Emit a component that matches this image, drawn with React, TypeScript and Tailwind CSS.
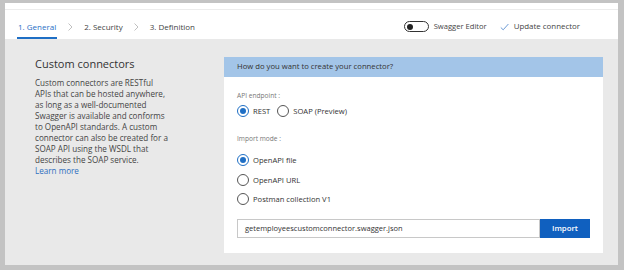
import { useState } from "react";

const font = { fontFamily: '"Open Sans", "Noto Sans", sans-serif' };

function Chevron() {
    return (
        <svg width="5" height="8" viewBox="0 0 5 8" className="mx-[11px]">
            <path d="M0.5 0.5 L4 4 L0.5 7.5" fill="none" stroke="#b0b0b0" strokeWidth="0.8" />
        </svg>
    );
}

function Radio({ label, checked, onClick }: { label: string; checked: boolean; onClick: () => void }) {
    return (
        <button onClick={onClick} className="flex items-center gap-[4px] text-[7.6px] text-[#333] leading-[12px]">
            <span
                className={`w-[12px] h-[12px] rounded-full border flex items-center justify-center ${checked ? "border-[#1f6fc5]" : "border-[#555]"}`}
            >
                {checked && <span className="w-[6px] h-[6px] rounded-full bg-[#1f6fc5]" />}
            </span>
            <span>{label}</span>
        </button>
    );
}

export default function App() {
    const [endpoint, setEndpoint] = useState("rest");
    const [mode, setMode] = useState("file");
    const [swagger, setSwagger] = useState(false);

    return (
        <div className="w-[624px] h-[270px] bg-[#c3c3c3] pt-[3px] pl-[5px] pr-[6px] pb-[5px]" style={font}>
            <div className="h-full flex flex-col bg-white">
                {/* Header with wizard tabs */}
                <div className="h-[7px] shrink-0 border-b border-[#ececec]" />
                <div className="h-[29px] shrink-0 flex items-stretch justify-between pl-[12px] pr-[38px]">
                    <div className="flex items-stretch text-[8px] text-[#444]">
                        <div className="flex items-center border-b-2 border-[#1f6fc5] text-[#1f6fc5] px-[1px] pt-[6px]">1. General</div>
                        <div className="flex items-center pt-[4px]"><Chevron /></div>
                        <div className="flex items-center pt-[4px]">2. Security</div>
                        <div className="flex items-center pt-[4px]"><Chevron /></div>
                        <div className="flex items-center pt-[4px]">3. Definition</div>
                    </div>
                    <div className="flex items-center pt-[4px] text-[#444]">
                        <button
                            onClick={() => setSwagger(!swagger)}
                            className="w-[25px] h-[11px] rounded-full border border-[#333] flex items-center px-[2px]"
                        >
                            <span className={`w-[6px] h-[6px] rounded-full bg-[#222] ${swagger ? "ml-auto" : ""}`} />
                        </button>
                        <span className="ml-[5px] text-[7.6px]">Swagger Editor</span>
                        <svg width="9" height="8" viewBox="0 0 9 8" className="ml-[13px]">
                            <path d="M0.8 4.5 L3.2 6.8 L8.4 1" fill="none" stroke="#5b8fd0" strokeWidth="0.9" />
                        </svg>
                        <span className="ml-[5px] text-[7.9px]">Update connector</span>
                    </div>
                </div>

                {/* Body */}
                <div className="flex-1 min-h-0 overflow-hidden bg-[#e9e9e9] flex pl-[30px] pr-[15px] pt-[18px] pb-[12px]">
                    <div className="w-[189px] shrink-0">
                        <h1 className="text-[11px] text-[#333] leading-[14px] mb-[6px]">Custom connectors</h1>
                        <p className="w-[135px] text-[8.1px] leading-[11px] text-[#444]">
                            Custom connectors are RESTful APIs that can be hosted anywhere, as long as a well-documented Swagger is available and conforms to OpenAPI standards. A custom connector can also be created for a SOAP API using the WSDL that describes the SOAP service.
                            <br />
                            <a className="text-[#2f6fc0]">Learn more</a>
                        </p>
                    </div>

                    <div className="flex-1 bg-white flex flex-col">
                        <div className="h-[20px] shrink-0 bg-[#a3c5e8] flex items-center px-[13px] text-[7.7px] text-[#333]">
                            How do you want to create your connector?
                        </div>
                        <div className="px-[13px] pt-[13px] text-[#333]">
                            <div className="text-[6.6px] text-[#777] leading-[12px]">API endpoint :</div>
                            <div className="flex items-center gap-[7px] mt-[3px]">
                                <Radio label="REST" checked={endpoint === "rest"} onClick={() => setEndpoint("rest")} />
                                <Radio label="SOAP (Preview)" checked={endpoint === "soap"} onClick={() => setEndpoint("soap")} />
                            </div>
                            <div className="text-[6.6px] text-[#777] leading-[12px] mt-[16px]">Import mode :</div>
                            <div className="flex flex-col items-start gap-[7.5px] mt-[9px]">
                                <Radio label="OpenAPI file" checked={mode === "file"} onClick={() => setMode("file")} />
                                <Radio label="OpenAPI URL" checked={mode === "url"} onClick={() => setMode("url")} />
                                <Radio label="Postman collection V1" checked={mode === "postman"} onClick={() => setMode("postman")} />
                            </div>
                            <div className="flex mt-[14px] w-[353px]">
                                <div className="flex-1 h-[19px] border border-[#c8c8c8] flex items-center px-[7px] text-[7.5px] text-[#333]">
                                    getemployeescustomconnector.swagger.json
                                </div>
                                <button className="w-[50px] h-[19px] bg-[#1060bf] text-white text-[7.8px] font-semibold">Import</button>
                            </div>
                        </div>
                    </div>
                </div>
            </div>
        </div>
    );
}
